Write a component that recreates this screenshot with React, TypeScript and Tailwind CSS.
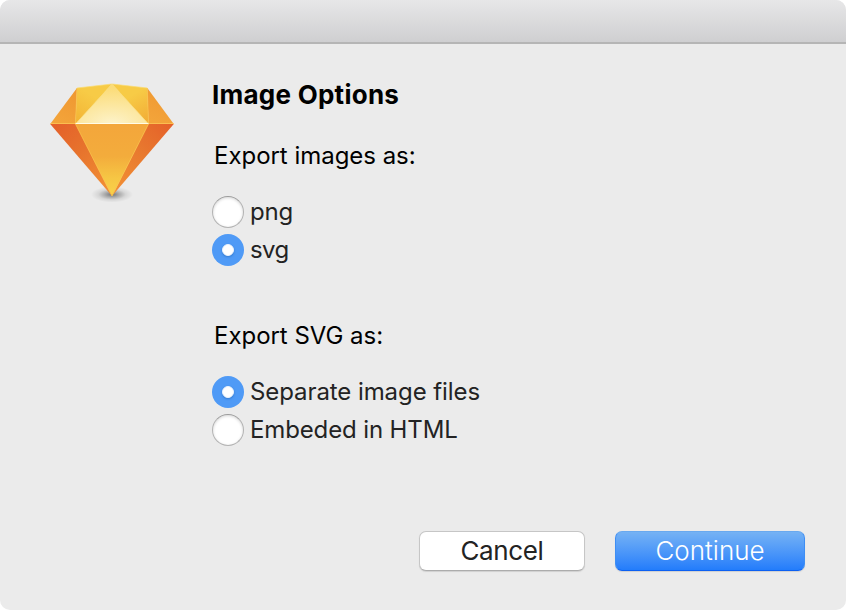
import { useState } from "react";

function SketchLogo() {
  return (
    <svg className="block h-[136px] w-[144px]" viewBox="0 0 144 136" aria-hidden="true">
      <defs>
        <radialGradient id="top" cx="0.5" cy="1" r="0.9">
          <stop offset="0" stopColor="#fdf3cb" />
          <stop offset="1" stopColor="#fbdc78" />
        </radialGradient>
        <linearGradient id="front" x1="0" y1="0" x2="0" y2="1">
          <stop offset="0" stopColor="#f3a63b" />
          <stop offset="0.45" stopColor="#f3ac3c" />
          <stop offset="0.75" stopColor="#f6c644" />
          <stop offset="1" stopColor="#f9d24a" />
        </linearGradient>
        <linearGradient id="lowerLeft" gradientUnits="userSpaceOnUse" x1="12" y1="52" x2="67" y2="110">
          <stop offset="0" stopColor="#e4602a" />
          <stop offset="0.5" stopColor="#e7742d" />
          <stop offset="1" stopColor="#f18c33" />
        </linearGradient>
        <linearGradient id="lowerRight" gradientUnits="userSpaceOnUse" x1="132" y1="52" x2="77" y2="110">
          <stop offset="0" stopColor="#e56129" />
          <stop offset="0.5" stopColor="#e8792f" />
          <stop offset="1" stopColor="#f18c33" />
        </linearGradient>
        <linearGradient id="upperLeft" x1="0.8" y1="0" x2="0.4" y2="1">
          <stop offset="0" stopColor="#ef9731" />
          <stop offset="1" stopColor="#f3a43a" />
        </linearGradient>
        <linearGradient id="shoulderLeft" gradientUnits="userSpaceOnUse" x1="34" y1="45" x2="50" y2="20">
          <stop offset="0" stopColor="#f3b536" />
          <stop offset="1" stopColor="#f7cb46" />
        </linearGradient>
        <linearGradient id="shoulderRight" gradientUnits="userSpaceOnUse" x1="109" y1="45" x2="94" y2="20">
          <stop offset="0" stopColor="#f2ae37" />
          <stop offset="1" stopColor="#f7cb46" />
        </linearGradient>
        <radialGradient id="shadow">
          <stop offset="0" stopColor="#000" stopOpacity="0.5" />
          <stop offset="0.3" stopColor="#000" stopOpacity="0.3" />
          <stop offset="0.65" stopColor="#000" stopOpacity="0.09" />
          <stop offset="1" stopColor="#000" stopOpacity="0" />
        </radialGradient>
      </defs>
      <ellipse cx="72" cy="120.500" rx="21" ry="8" fill="url(#shadow)" />
      <path d="M10.200 50 37 50 72 122Z" fill="url(#lowerLeft)" />
      <path d="M133.800 50 108 50 72 122Z" fill="url(#lowerRight)" />
      <path d="M35.500 50H108.500L72 122Z" fill="url(#front)" />
      <path d="M10.200 50 37 14 35.500 50Z" fill="url(#upperLeft)" />
      <path d="M133.800 50 107.300 14 108.500 50Z" fill="url(#upperLeft)" />
      <path d="M37 14 72 10 35.500 50Z" fill="url(#shoulderLeft)" />
      <path d="M107.300 14 72 10 108.500 50Z" fill="url(#shoulderRight)" />
      <path d="M35.500 50 72 10 108.500 50Z" fill="url(#top)" />
      <path d="M37 14 35.500 50 72 122 108.500 50 107.300 14" fill="none" stroke="#f9c24a" strokeWidth="0.8" strokeLinejoin="bevel" />
      <path d="M37 14 72 10 107.300 14M35.500 50 72 10 108.500 50" fill="none" stroke="#fbdb70" strokeWidth="0.7" strokeLinejoin="bevel" />
      <path d="M10.500 49.500H133.500" stroke="#fbbd50" />
      <path d="M35.500 49.500H108.500" stroke="#fffbe6" />
    </svg>
  );
}

type RadioProps = {
  label: string;
  checked: boolean;
  onSelect: () => void;
  tracking: string;
};

function Radio({ label, checked, onSelect, tracking }: RadioProps) {
  return (
    <button role="radio" aria-checked={checked} onClick={onSelect} className="flex h-8 items-center gap-[6px] text-[#232323]">
      {checked ? (
        <span className="flex size-8 items-center justify-center rounded-full bg-[#4f9af6]">
          <span className="size-3 rounded-full border-[0.5px] border-[#eaf3fe] bg-white shadow-[0_1px_2px_rgba(28,92,170,0.5)]" />
        </span>
      ) : (
        <span className="size-8 rounded-full border border-[#b3b3b3] border-t-[#9c9c9c] bg-white shadow-[inset_0_1px_3px_#d5d5d5]" />
      )}
      <span className={`text-[24px] leading-8 whitespace-nowrap ${tracking}`}>{label}</span>
    </button>
  );
}

export default function App() {
  const [format, setFormat] = useState("svg");
  const [output, setOutput] = useState("separate");

  return (
    <div className="h-[610px] w-[846px] bg-white font-['Inter',sans-serif] text-black">
      <div className="flex h-full flex-col overflow-hidden rounded-[10px] bg-[#ebebeb]">
        <header className="h-11 shrink-0 border-b-2 border-[#b5b5b5] bg-linear-to-b from-[#e7e7e8] to-[#cfcfd1]" />
        <main className="flex flex-1 flex-col">
          <div className="flex h-[487px] pl-10">
            <div className="w-[172px] pt-[30px]">
              <SketchLogo />
            </div>
            <section className="flex flex-col items-start">
              <h1 className="mt-[35px] text-[26px] leading-8 font-bold tracking-[0.25px]">Image Options</h1>
              <h2 className="mt-[29px] ml-[2px] text-[24px] leading-8 tracking-[-0.03px]">Export images as:</h2>
              <div role="radiogroup" className="mt-[24px] flex flex-col gap-[6px]">
                <Radio label="png" checked={format === "png"} onSelect={() => setFormat("png")} tracking="tracking-[-0.2px]" />
                <Radio label="svg" checked={format === "svg"} onSelect={() => setFormat("svg")} tracking="tracking-[-0.6px]" />
              </div>
              <h2 className="mt-[54px] ml-[2px] text-[24px] leading-8 tracking-[-0.03px]">Export SVG as:</h2>
              <div role="radiogroup" className="mt-[24px] flex flex-col gap-[6px]">
                <Radio label="Separate image files" checked={output === "separate"} onSelect={() => setOutput("separate")} tracking="tracking-[-0.08px]" />
                <Radio label="Embeded in HTML" checked={output === "embedded"} onSelect={() => setOutput("embedded")} tracking="tracking-[-0.13px]" />
              </div>
            </section>
          </div>
          <footer className="flex justify-end gap-[30px] pr-[41px] text-[26px]">
            <button className="h-10 w-[166px] rounded-[7px] border border-[#c6c6c6] border-b-[#acacac] bg-white leading-[38px] tracking-[-0.35px] text-[#232323] shadow-[0_1px_1px_#d0d0d0]">
              Cancel
            </button>
            <button className="h-10 w-[190px] rounded-[7px] border border-[#3e8ef4] border-t-[#69a9ef] border-b-[#0c60f2] bg-linear-to-b from-[#75b2f4] to-[#227cfb] leading-[38px] font-light tracking-[0px] text-white shadow-[0_1px_1px_#d0d0d0]">
              Continue
            </button>
          </footer>
        </main>
      </div>
    </div>
  );
}
